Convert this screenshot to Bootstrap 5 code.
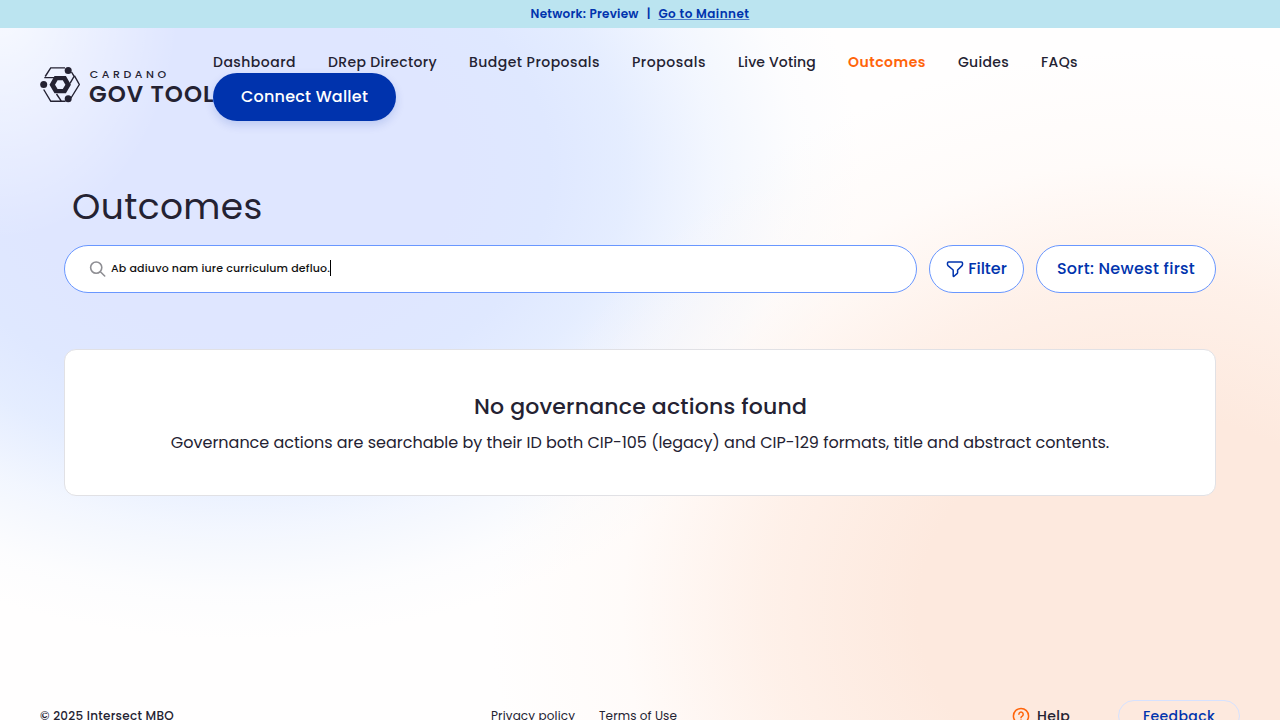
<!DOCTYPE html>
<html lang="en">
<head>
<meta charset="utf-8">
<meta name="viewport" content="width=device-width, initial-scale=1">
<title>GovTool – Outcomes</title>
<link href="https://cdn.jsdelivr.net/npm/bootstrap@5.3.0/dist/css/bootstrap.min.css" rel="stylesheet">
<style>
  :root { --ink: #242232; --blue: #0033ad; --line: #6997ff; --orange: #ff640a; }
  body {
    font-family: Poppins, Inter, sans-serif; color: var(--ink); height: 100vh; overflow: hidden;
    background:
      radial-gradient(ellipse 660px 560px at 1150px 610px, #fde9de 0%, #fde9de 35%, rgba(254,236,226,.75) 58%, rgba(255,244,238,.3) 80%, rgba(255,255,255,0) 100%),
      radial-gradient(ellipse 180px 240px at 0 0, rgba(255,255,255,.8), rgba(255,255,255,0)),
      radial-gradient(ellipse 620px 470px at 240px 170px, #dfe6ff 0%, #dfe6ff 35%, #dfe8ff 50%, rgba(224,234,255,.85) 62%, rgba(232,240,255,.55) 76%, rgba(244,248,255,.25) 90%, rgba(255,255,255,0) 100%),
      #fffefe;
  }
  .network-bar { height: 28px; background: #bbe4f0; color: var(--blue); font-size: 12px; font-weight: 600; white-space: pre; }
  .network-bar a { color: var(--blue); text-underline-offset: 1px; letter-spacing: .45px; text-decoration-thickness: 1px; text-decoration-color: rgba(0,51,173,.6); }
  .site-header { padding: 23px 40px 0; height: 122px; }
  .brand-mark { width: 173px; height: 36px; margin-top: 16px; overflow: visible; flex: none; }
  .main-nav { gap: 0 32px; font-size: 14px; font-weight: 500; line-height: 22px; }
  .main-nav a { color: var(--ink); text-decoration: none; white-space: nowrap; }
  .main-nav a.current { color: var(--orange); font-weight: 600; }
  .wallet { width: 183px; height: 48px; background: var(--blue); color: #fff; font-weight: 500; font-size: 16px; letter-spacing: .22px; box-shadow: 0 4px 10px rgba(0,51,173,.16); padding: 0; border: 0; }
  .page-title { font-size: 36px; font-weight: 400; line-height: 44px; letter-spacing: .4px; margin: 0 0 16px 8px; }
  .content { padding: 35px 64px 0; }
  .pill { height: 48px; background: #fff; border: 1px solid var(--line); border-radius: 24px; color: var(--blue); font-weight: 500; font-size: 16px; }
  .query { font-size: 11px; letter-spacing: .17px; color: #111; font-weight: 500; padding-bottom: 1px; }
  .caret { width: 1px; height: 16px; background: #000; margin-bottom: 2px; }
  .empty-state { height: 147px; margin-top: 56px; border: 1px solid #e1e1e5; border-radius: 12px; padding-top: 40px; }
  .empty-state h2 { font-size: 22px; font-weight: 500; line-height: 34px; letter-spacing: .19px; margin: 0 0 7px; padding-left: 1px; }
  .empty-state p { font-size: 16px; line-height: 24px; letter-spacing: -.01px; margin: 0; }
  .site-footer { margin-top: 204px; padding: 0 40px; height: 32px; font-size: 12px; line-height: 18px; }
  .site-footer a { color: var(--ink); text-decoration: none; }
  .foot-col { width: 451px; }
  .feedback { width: 122px; height: 32px; border: 1px solid #d6e2ff; border-radius: 16px; color: var(--blue); font-size: 14px; font-weight: 500; letter-spacing: .38px; }
</style>
</head>
<body>
<div class="network-bar d-flex justify-content-center align-items-center"><span style="letter-spacing:.25px">Network: Preview</span><span class="mx-2">|</span><a href="#">Go to Mainnet</a></div>

<header class="site-header d-flex align-items-start">
  <svg class="brand-mark" viewBox="0 0 173 36" role="img" aria-label="Cardano GovTool">
    <g fill="none" stroke="#242232" stroke-width="1.4">
      <path d="M5.2 9.5 10.7.9H25M31.5 5l2.6 4.3-4.1 7M34.5 8.8 39.3 17.5 31 31M4.3 10.6H14M3.7 22.5 10.8 34.3H25.5M16.5 27l5 7.3"/>
    </g>
    <path fill="#242232" fill-rule="evenodd" d="M14.5 9h11.4l5 8.7-5 8.5H14.5l-5-8.5zM17.6 13.2l-2.6 4.5 2.6 4.4h5.2l2.6-4.4-2.6-4.5z"/>
    <g fill="#242232"><circle cx="28.2" cy="3.4" r="3.5"/><circle cx="3.7" cy="17.5" r="3.5"/><circle cx="28.2" cy="31.7" r="3.5"/></g>
    <g fill="#242232" font-family="Poppins, Inter, sans-serif">
      <text x="49.7" y="10.8" font-size="11" font-weight="500" textLength="76.5" lengthAdjust="spacing">CARDANO</text>
      <text x="49" y="34.6" font-size="23" font-weight="600" textLength="124.5" lengthAdjust="spacing">GOV TOOL</text>
    </g>
  </svg>
  <nav class="main-nav d-flex flex-wrap flex-grow-1">
    <a href="#" style="letter-spacing:.47px">Dashboard</a>
    <a href="#" style="letter-spacing:.34px">DRep Directory</a>
    <a href="#" style="letter-spacing:.46px">Budget Proposals</a>
    <a href="#" style="letter-spacing:.53px">Proposals</a>
    <a href="#" style="letter-spacing:.15px">Live Voting</a>
    <a href="#" class="current" style="letter-spacing:.5px">Outcomes</a>
    <a href="#" style="letter-spacing:.3px">Guides</a>
    <a href="#" style="letter-spacing:.38px">FAQs</a>
    <div class="w-100"></div>
    <button class="btn rounded-pill wallet">Connect Wallet</button>
  </nav>
</header>

<main class="content">
  <h1 class="page-title">Outcomes</h1>
  <div class="d-flex">
    <div class="pill d-flex align-items-center flex-grow-1" style="padding-left:24px">
      <svg width="18" height="18" viewBox="0 0 18 18" fill="none" stroke="#8e8e93" stroke-width="1.6" stroke-linecap="round"><circle cx="7.2" cy="7.6" r="5.6"/><path d="m11.4 11.8 4.3 4.2"/></svg>
      <span class="query ms-1">Ab adiuvo nam iure curriculum defluo.</span><span class="caret"></span>
    </div>
    <button class="pill d-flex align-items-center justify-content-center p-0" style="width:95px;margin:0 12px">
      <svg class="me-1" width="18" height="18" viewBox="0 0 18 18" fill="none" stroke="#0033ad" stroke-width="1.5" stroke-linejoin="round"><path d="M2.6 2h12.8q1.1 0 1.1 1v1.6q0 .5-.4 1L11.6 10v2.6q0 .4-.3.8L8 16.3q-.8.4-.8-.5V10.6q0-.5-.3-.8L2 5.6q-.5-.5-.5-1V3q0-1 1.1-1z"/></svg>Filter
    </button>
    <button class="pill p-0" style="width:180px;letter-spacing:.27px">Sort: Newest first</button>
  </div>

  <section class="empty-state bg-white text-center">
    <h2>No governance actions found</h2>
    <p>Governance actions are searchable by their ID both CIP-105 (legacy) and CIP-129 formats, title and abstract contents.</p>
  </section>
</main>

<footer class="site-footer d-flex align-items-center">
  <div class="foot-col" style="letter-spacing:.27px;font-weight:500">© 2025 Intersect MBO</div>
  <div class="d-flex gap-4"><a href="#" style="letter-spacing:.13px">Privacy policy</a><a href="#" style="letter-spacing:.09px">Terms of Use</a></div>
  <div class="d-flex align-items-center ms-auto">
    <svg width="18" height="18" viewBox="0 0 18 18" fill="none" stroke="#ff640a" stroke-width="1.5" stroke-linecap="round"><circle cx="9" cy="9" r="7.6"/><path d="M6.9 7.2a2.15 2.15 0 1 1 3.3 1.9Q9 9.8 9 10.7M9 12.9v.1"/></svg>
    <a href="#" style="font-size:14px;font-weight:500;letter-spacing:.3px;margin:0 48px 0 7px">Help</a>
    <div class="feedback d-flex align-items-center justify-content-center">Feedback</div>
  </div>
</footer>
<script src="https://cdn.jsdelivr.net/npm/bootstrap@5.3.0/dist/js/bootstrap.bundle.min.js"></script>
</body>
</html>
